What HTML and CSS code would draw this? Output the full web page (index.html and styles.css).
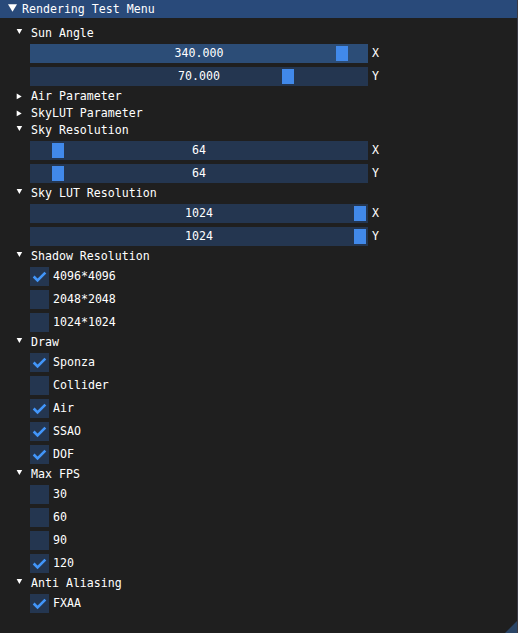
FILE: index.html
```html
<!DOCTYPE html>
<html>
<head>
<meta charset="utf-8">
<link rel="stylesheet" href="styles.css">
</head>
<body>
<div class="win">
  <div class="title">
    <svg class="tarrow" viewBox="0 0 14 18"><polygon points="0,4.2 9,4.2 4.5,11.8"/></svg>
    <span>Rendering Test Menu</span>
  </div>
  <div class="content">
    <div class="node"><svg viewBox="0 0 15 13"><polygon class="down" points="0.6,2 6.2,2 3.4,6.9"/></svg><span>Sun Angle</span></div>
    <div class="group">
      <div class="srow"><div class="slider hot"><div class="grab" style="left:306px"></div><span class="val">340.000</span></div><span class="lbl">X</span></div>
      <div class="srow"><div class="slider"><div class="grab" style="left:252px"></div><span class="val">70.000</span></div><span class="lbl">Y</span></div>
    </div>
    <div class="node"><svg viewBox="0 0 15 13"><polygon points="0.7,3.5 0.7,9.3 5.7,6.4"/></svg><span>Air Parameter</span></div>
    <div class="node"><svg viewBox="0 0 15 13"><polygon points="0.7,3.5 0.7,9.3 5.7,6.4"/></svg><span>SkyLUT Parameter</span></div>
    <div class="node"><svg viewBox="0 0 15 13"><polygon points="0.6,2 6.2,2 3.4,6.9"/></svg><span>Sky Resolution</span></div>
    <div class="group">
      <div class="srow"><div class="slider"><div class="grab" style="left:22px"></div><span class="val">64</span></div><span class="lbl">X</span></div>
      <div class="srow"><div class="slider"><div class="grab" style="left:22px"></div><span class="val">64</span></div><span class="lbl">Y</span></div>
    </div>
    <div class="node"><svg viewBox="0 0 15 13"><polygon points="0.6,2 6.2,2 3.4,6.9"/></svg><span>Sky LUT Resolution</span></div>
    <div class="group">
      <div class="srow"><div class="slider"><div class="grab" style="left:324px"></div><span class="val">1024</span></div><span class="lbl">X</span></div>
      <div class="srow"><div class="slider"><div class="grab" style="left:324px"></div><span class="val">1024</span></div><span class="lbl">Y</span></div>
    </div>
    <div class="node"><svg viewBox="0 0 15 13"><polygon points="0.6,2 6.2,2 3.4,6.9"/></svg><span>Shadow Resolution</span></div>
    <div class="group">
      <div class="crow"><div class="box"><svg viewBox="0 0 19 19"><polyline points="3.65,9.5 7.55,13.4 15.35,5.6"/></svg></div><span>4096*4096</span></div>
      <div class="crow"><div class="box"></div><span>2048*2048</span></div>
      <div class="crow"><div class="box"></div><span>1024*1024</span></div>
    </div>
    <div class="node"><svg viewBox="0 0 15 13"><polygon points="0.6,2 6.2,2 3.4,6.9"/></svg><span>Draw</span></div>
    <div class="group">
      <div class="crow"><div class="box"><svg viewBox="0 0 19 19"><polyline points="3.65,9.5 7.55,13.4 15.35,5.6"/></svg></div><span>Sponza</span></div>
      <div class="crow"><div class="box"></div><span>Collider</span></div>
      <div class="crow"><div class="box"><svg viewBox="0 0 19 19"><polyline points="3.65,9.5 7.55,13.4 15.35,5.6"/></svg></div><span>Air</span></div>
      <div class="crow"><div class="box"><svg viewBox="0 0 19 19"><polyline points="3.65,9.5 7.55,13.4 15.35,5.6"/></svg></div><span>SSAO</span></div>
      <div class="crow"><div class="box"><svg viewBox="0 0 19 19"><polyline points="3.65,9.5 7.55,13.4 15.35,5.6"/></svg></div><span>DOF</span></div>
    </div>
    <div class="node"><svg viewBox="0 0 15 13"><polygon points="0.6,2 6.2,2 3.4,6.9"/></svg><span>Max FPS</span></div>
    <div class="group">
      <div class="crow"><div class="box"></div><span>30</span></div>
      <div class="crow"><div class="box"></div><span>60</span></div>
      <div class="crow"><div class="box"></div><span>90</span></div>
      <div class="crow"><div class="box"><svg viewBox="0 0 19 19"><polyline points="3.65,9.5 7.55,13.4 15.35,5.6"/></svg></div><span>120</span></div>
    </div>
    <div class="node"><svg viewBox="0 0 15 13"><polygon points="0.6,2 6.2,2 3.4,6.9"/></svg><span>Anti Aliasing</span></div>
    <div class="group">
      <div class="crow"><div class="box"><svg viewBox="0 0 19 19"><polyline points="3.65,9.5 7.55,13.4 15.35,5.6"/></svg></div><span>FXAA</span></div>
    </div>
  </div>
  <svg class="grip" viewBox="0 0 12 12"><polygon points="0,12 12,12 12,0"/></svg>
</div>
</body>
</html>
```
FILE: styles.css
```css
* { box-sizing: border-box; margin: 0; padding: 0; }
html, body { background: #1f1f1f; }
body {
  margin: 0;
  font-family: "DejaVu Sans Mono", "Liberation Mono", monospace;
  font-size: 11.6px;
  line-height: 13px;
  color: #ffffff;
}
.win {
  position: relative;
  width: 518px;
  height: 633px;
  background: #1f1f1f;
  border-right: 1px solid #3a3a44;
  overflow: hidden;
}
.title {
  height: 18px;
  background: #294a7a;
  display: flex;
  align-items: center;
  padding-left: 8px;
}
.title svg { width: 14px; height: 18px; flex: none; }
.title svg polygon { fill: #ffffff; }
.content {
  display: flex;
  flex-direction: column;
  gap: 4px;
  padding: 9px 0 0 16px;
}
.node {
  height: 13px;
  display: flex;
  align-items: center;
}
.node svg { width: 15px; height: 13px; flex: none; }
.node svg polygon { fill: #ffffff; }
.group {
  display: flex;
  flex-direction: column;
  gap: 4px;
  padding-left: 14px;
}
.srow, .crow {
  height: 19px;
  display: flex;
  align-items: center;
  gap: 4px;
}
.slider {
  position: relative;
  width: 338px;
  height: 19px;
  background: #243650;
  display: flex;
  align-items: center;
  justify-content: center;
}
.slider.hot { background: #2c4d77; }
.grab {
  position: absolute;
  top: 2px;
  width: 12px;
  height: 15px;
  background: #4189ea;
}
.val { position: relative; }
.box {
  width: 19px;
  height: 19px;
  background: #243650;
  flex: none;
}
.box svg { width: 19px; height: 19px; display: block; }
.box polyline {
  fill: none;
  stroke: #4296fa;
  stroke-width: 2.6;
}
.grip {
  position: absolute;
  right: 0;
  bottom: 0;
  width: 12px;
  height: 12px;
}
.grip polygon { fill: #2a4566; }
```
